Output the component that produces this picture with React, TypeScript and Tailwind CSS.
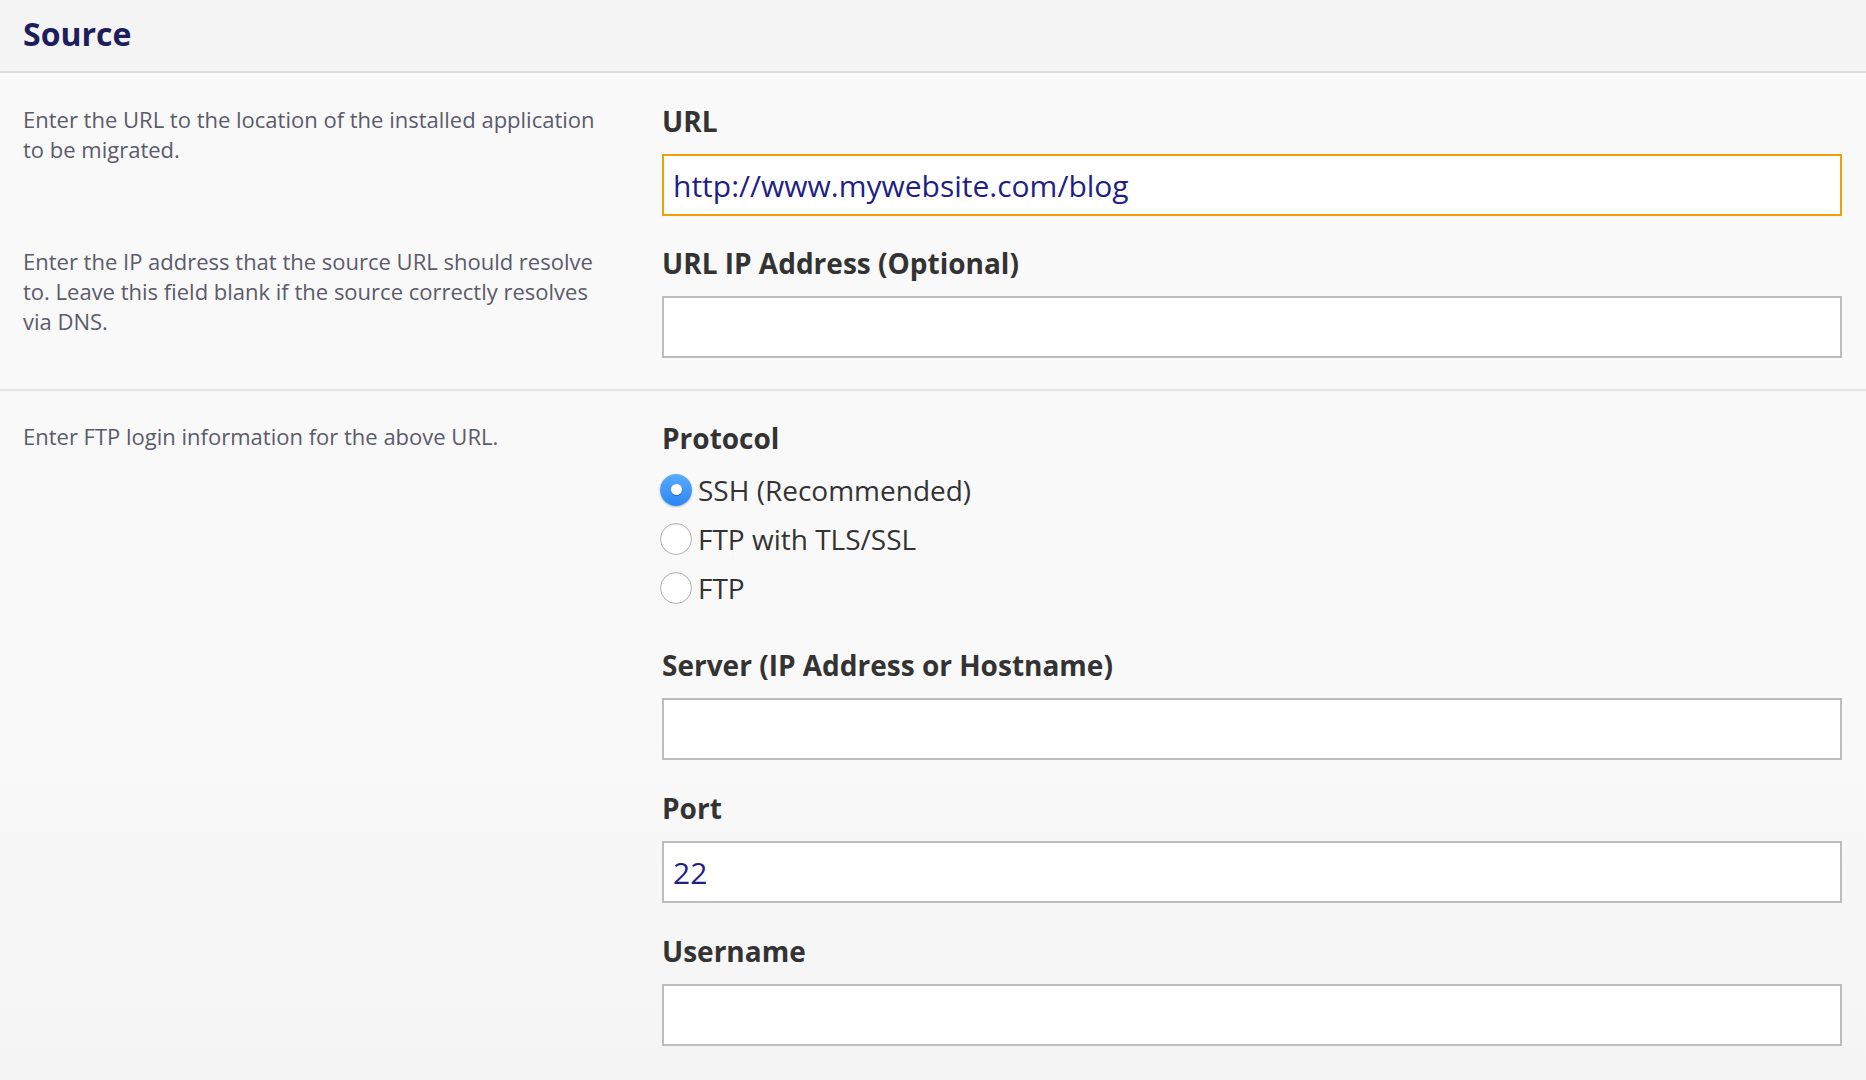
import React from 'react';

const font = { fontFamily: '"Open Sans", "Noto Sans", sans-serif' };

const Label: React.FC<{ children: React.ReactNode }> = ({ children }) => (
  <div className="text-[28px] leading-[36px] font-bold text-[#333333] mb-[15px]">{children}</div>
);

const TextInput: React.FC<{ value?: string; focused?: boolean }> = ({ value = '', focused }) => (
  <div
    className={`h-[62px] w-full bg-white border-2 flex items-center px-[9px] text-[30px] text-[#1f1f86] ${
      focused ? 'border-[#f0a00a]' : 'border-[#bdbdbd]'
    }`}
  >
    {value}
  </div>
);

const Desc: React.FC<{ children: React.ReactNode }> = ({ children }) => (
  <p className="text-[22px] leading-[30px] text-[#5b5b6b] pt-[1px]">{children}</p>
);

const Row: React.FC<{ desc?: React.ReactNode; children: React.ReactNode }> = ({ desc, children }) => (
  <div className="grid grid-cols-[590px_1fr] gap-x-[49px]">
    <div>{desc && <Desc>{desc}</Desc>}</div>
    <div>{children}</div>
  </div>
);

const Radio: React.FC<{ label: string; checked?: boolean }> = ({ label, checked }) => (
  <div className="h-[49px] flex items-center -ml-[2px]">
    {checked ? (
      <span className="w-[32px] h-[32px] rounded-full bg-gradient-to-b from-[#5aabff] to-[#2a86f3] flex items-center justify-center shadow-[0_1px_2px_rgba(0,0,0,0.25)]">
        <span className="w-[11px] h-[11px] rounded-full bg-white shadow-[0_1px_1px_rgba(0,0,0,0.3)]" />
      </span>
    ) : (
      <span className="w-[32px] h-[32px] rounded-full bg-white border border-[#b4b4b4] shadow-[inset_0_1px_1px_rgba(0,0,0,0.08)]" />
    )}
    <span className="ml-[6px] text-[28px] text-[#333333]">{label}</span>
  </div>
);

export default function App() {
  return (
    <div style={font} className="h-[1080px] overflow-hidden bg-[#f9f9f9]">
      <div className="h-[73px] bg-[#f4f4f4] border-b-2 border-[#dcdcdc] flex items-center pl-[23px] pb-[4px]">
        <h1 className="text-[32px] font-bold text-[#1e1e5c]">Source</h1>
      </div>

      <div className="pl-[23px] pr-[24px] pt-[30px] pb-[31px] flex flex-col gap-[29px] border-b-2 border-[#e1e3e7]">
        <Row desc="Enter the URL to the location of the installed application to be migrated.">
          <Label>URL</Label>
          <TextInput value="http://www.mywebsite.com/blog" focused />
        </Row>
        <Row desc="Enter the IP address that the source URL should resolve to. Leave this field blank if the source correctly resolves via DNS.">
          <Label>URL IP Address (Optional)</Label>
          <TextInput />
        </Row>
      </div>

      <div className="pl-[23px] pr-[24px] pt-[29px] flex flex-col gap-[30px] bg-gradient-to-b from-[#f9f9f9] via-[#f9f9f9] to-[#f4f4f4] h-[700px]">
        <Row desc="Enter FTP login information for the above URL.">
          <div className="text-[28px] leading-[36px] font-bold text-[#333333] mb-[9px]">Protocol</div>
          <Radio label="SSH (Recommended)" checked />
          <Radio label="FTP with TLS/SSL" />
          <Radio label="FTP" />
          <div className="h-[5px]" />
        </Row>
        <Row>
          <Label>Server (IP Address or Hostname)</Label>
          <TextInput />
        </Row>
        <Row>
          <Label>Port</Label>
          <TextInput value="22" />
        </Row>
        <Row>
          <Label>Username</Label>
          <TextInput />
        </Row>
      </div>
    </div>
  );
}
